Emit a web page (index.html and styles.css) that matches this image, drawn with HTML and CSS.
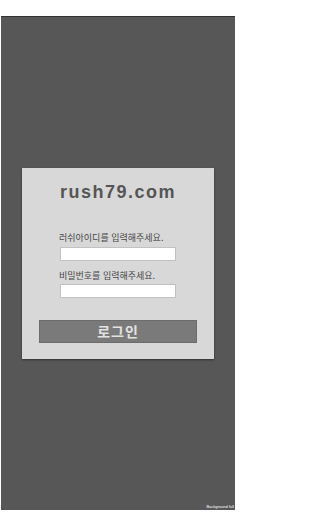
FILE: index.html
```html
<!DOCTYPE html>
<html lang="ko">
<head>
<meta charset="utf-8">
<meta name="viewport" content="width=236">
<title>rush79.com</title>
<link rel="stylesheet" href="styles.css">
</head>
<body>
<div class="screen">
  <div class="card">
    <div class="title">rush79.com</div>
    <div class="form">
      <div class="label label-first">러쉬아이디를 입력해주세요.</div>
      <input class="field field-first" type="text">
      <div class="label label-second">비밀번호를 입력해주세요.</div>
      <input class="field field-second" type="password">
    </div>
    <button class="login">로그인</button>
  </div>
  <div class="mark">Background full</div>
</div>
</body>
</html>
```
FILE: styles.css
```css
html, body {
  margin: 0;
  padding: 0;
  background: #ffffff;
}
body {
  width: 236px;
  height: 512px;
  overflow: hidden;
}
.screen {
  position: relative;
  margin: 16px 1px 0 1px;
  height: 494px;
  background: #575757;
  border-top: 1px solid #333;
  box-sizing: border-box;
  display: flex;
  align-items: center;
  justify-content: center;
}
.card {
  width: 192px;
  height: 191px;
  box-sizing: border-box;
  padding-top: 14px;
  background: #d8d8d8;
  box-shadow: 0 1px 2px rgba(0,0,0,0.45);
  display: flex;
  flex-direction: column;
  align-items: center;
}
.title {
  font-family: "Liberation Sans", Arial, sans-serif;
  font-weight: bold;
  font-size: 18px;
  line-height: 20px;
  letter-spacing: 1.5px;
  color: #555555;
}
.form {
  width: 118px;
  display: flex;
  flex-direction: column;
}
.label {
  font-family: "Noto Sans CJK KR", sans-serif;
  font-size: 9px;
  line-height: 12px;
  color: #474747;
  white-space: nowrap;
}
.label-first {
  margin-top: 30px;
}
.label-second {
  margin-top: 9px;
}
.field {
  display: block;
  margin: 3px 0 0 1px;
  padding: 0;
  width: 116px;
  height: 14px;
  box-sizing: border-box;
  border: 1px solid #c2c2c2;
  background: #ffffff;
  outline: none;
}
.field-second {
  margin-top: 2px;
}
.login {
  margin-top: 22px;
  width: 158px;
  height: 23px;
  padding: 0;
  border: 1px solid #6c6c6c;
  background: #7a7a7a;
  color: #e2e2e2;
  font-family: "Noto Sans CJK KR", sans-serif;
  font-weight: bold;
  font-size: 14px;
  line-height: 21px;
  letter-spacing: 1px;
}
.mark {
  position: absolute;
  right: 1px;
  bottom: 1px;
  font-family: "Liberation Sans", Arial, sans-serif;
  font-size: 4px;
  line-height: 4px;
  color: #ffffff;
}
```
